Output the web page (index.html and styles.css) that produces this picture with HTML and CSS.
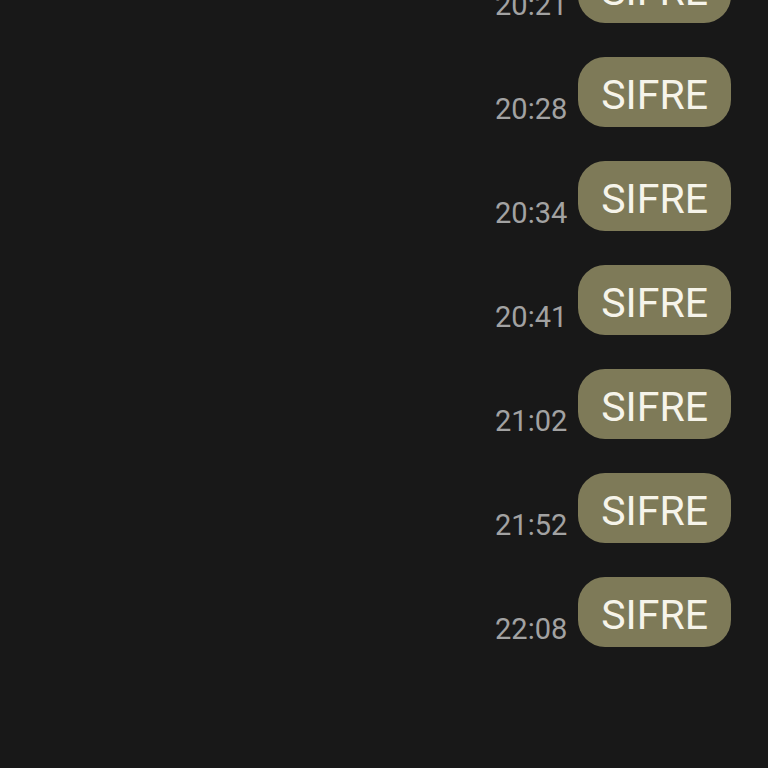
FILE: index.html
```html
<!DOCTYPE html>
<html lang="tr">
<head>
    <meta charset="utf-8">
    <title>Mesajlar</title>
    <link rel="stylesheet" href="styles.css">
</head>
<body>
    <div class="chat">
        <div class="message">
            <span class="time">20:21</span>
            <div class="bubble">SIFRE</div>
        </div>
        <div class="message">
            <span class="time">20:28</span>
            <div class="bubble">SIFRE</div>
        </div>
        <div class="message">
            <span class="time">20:34</span>
            <div class="bubble">SIFRE</div>
        </div>
        <div class="message">
            <span class="time">20:41</span>
            <div class="bubble">SIFRE</div>
        </div>
        <div class="message">
            <span class="time">21:02</span>
            <div class="bubble">SIFRE</div>
        </div>
        <div class="message">
            <span class="time">21:52</span>
            <div class="bubble">SIFRE</div>
        </div>
        <div class="message">
            <span class="time">22:08</span>
            <div class="bubble">SIFRE</div>
        </div>
    </div>
</body>
</html>
```

FILE: styles.css
```css
html, body {
    margin: 0;
    height: 100%;
    background-color: #181818;
    overflow: hidden;
}

body {
    font-family: Roboto, 'Noto Sans', sans-serif;
}

.chat {
    display: flex;
    flex-direction: column;
    gap: 34px;
    margin-top: -47px;
    padding-right: 37px;
}

.message {
    display: flex;
    justify-content: flex-end;
    align-items: flex-end;
    gap: 11px;
}

.time {
    font-size: 29px;
    line-height: 28px;
    color: #a2a2a2;
    margin-bottom: 4px;
}

.bubble {
    background-color: #7e7a58;
    color: #f6f4ea;
    font-size: 41px;
    line-height: 64px;
    height: 64px;
    padding: 6px 23px 0;
    border-radius: 27px;
}
```
